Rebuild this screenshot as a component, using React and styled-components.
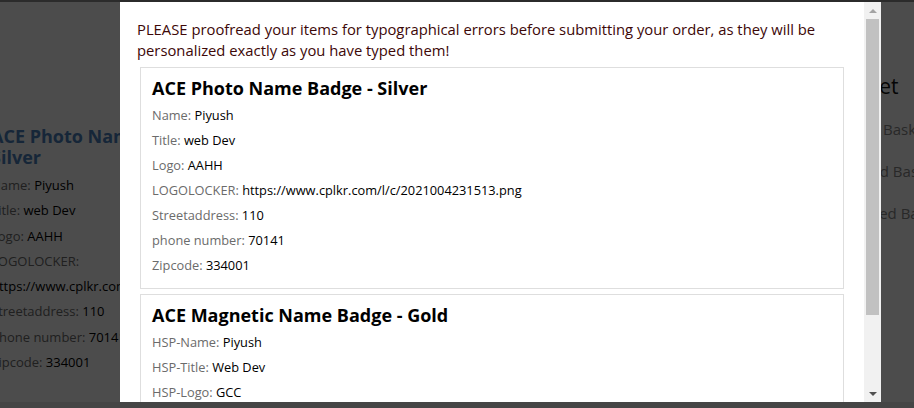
import React from 'react'
import styled, {createGlobalStyle} from 'styled-components'

const GlobalStyle = createGlobalStyle`
  html, body {
    margin: 0;
    padding: 0;
    background: #ffffff;
    font-family: "Open Sans", "Liberation Sans", sans-serif;
  }
`

const leftItems = [
  ['Name', 'Piyush'],
  ['Title', 'web Dev'],
  ['Logo', 'AAHH'],
  ['LOGOLOCKER', ''],
  ['', 'https://www.cplkr.com/l/c/2021004231513.png'],
  ['Streetaddress', '110'],
  ['phone number', '70141'],
  ['Zipcode', '334001'],
]

const basketItems = ['Gift Basket', 'Food Basket', 'Mixed Basket']

const orderItems = [
  {
    title: 'ACE Photo Name Badge - Silver',
    fields: [
      ['Name', 'Piyush'],
      ['Title', 'web Dev'],
      ['Logo', 'AAHH'],
      ['LOGOLOCKER', 'https://www.cplkr.com/l/c/2021004231513.png'],
      ['Streetaddress', '110'],
      ['phone number', '70141'],
      ['Zipcode', '334001'],
    ],
  },
  {
    title: 'ACE Magnetic Name Badge - Gold',
    fields: [
      ['HSP-Name', 'Piyush'],
      ['HSP-Title', 'Web Dev'],
      ['HSP-Logo', 'GCC'],
      ['HSP-Streetaddress', '110'],
    ],
  },
]

function App() {
  return (
    <>
      <GlobalStyle />
      <Page>
        <TopBar />
        <PageBody>
          <LeftColumn>
            <PageHeading>ACE Photo Name Badge - Silver</PageHeading>
            {leftItems.map(([label, value], i) => (
              <PageRow key={i}>
                {label && <Label>{label}: </Label>}
                <Value>{value}</Value>
              </PageRow>
            ))}
          </LeftColumn>
          <RightColumn>
            <BasketHeading>Basket</BasketHeading>
            {basketItems.map((b) => (
              <BasketRow key={b}>{b}</BasketRow>
            ))}
          </RightColumn>
        </PageBody>
        <Footer />
      </Page>

      <Overlay>
        <Modal>
          <ModalContent>
            <Notice>
              PLEASE proofread your items for typographical errors before submitting your order, as they will be
              personalized exactly as you have typed them!
            </Notice>
            <Cards>
              {orderItems.map((item) => (
                <Card key={item.title}>
                  <CardTitle>{item.title}</CardTitle>
                  {item.fields.map(([label, value]) => (
                    <Row key={label}>
                      <Label>{label}: </Label>
                      <Value>{value}</Value>
                    </Row>
                  ))}
                </Card>
              ))}
            </Cards>
          </ModalContent>
          <ScrollBar>
            <ScrollButton>
              <Arrow up />
            </ScrollButton>
            <Track>
              <Thumb />
            </Track>
            <ScrollButton>
              <Arrow />
            </ScrollButton>
          </ScrollBar>
        </Modal>
      </Overlay>
    </>
  )
}

export default App

const Page = styled.div`
  width: 914px;
  height: 408px;
  display: flex;
  flex-direction: column;
  overflow: hidden;
`

const TopBar = styled.div`
  height: 2px;
  background: #8f8f8f;
  flex-shrink: 0;
`

const PageBody = styled.div`
  flex: 1;
  display: flex;
  justify-content: space-between;
`

const LeftColumn = styled.div`
  width: 225px;
  margin-left: -9px;
  padding-top: 124px;
`

const PageHeading = styled.h2`
  margin: 0 0 5px;
  font-size: 18px;
  line-height: 21px;
  font-weight: 700;
  color: #4a7fbd;
`

const PageRow = styled.p`
  margin: 0;
  font-size: 13px;
  line-height: 25.3px;
  white-space: nowrap;
`

const RightColumn = styled.div`
  width: 130px;
  padding-top: 71px;
  margin-right: -70px;
`

const BasketHeading = styled.h2`
  margin: 0 0 8px -21px;
  font-size: 21px;
  line-height: 27px;
  font-weight: 500;
  color: #111;
`

const BasketRow = styled.div`
  font-size: 15px;
  line-height: 42px;
  color: #888;
`

const Footer = styled.div`
  height: 6px;
  background: #e6e6e6;
  flex-shrink: 0;
`

const Overlay = styled.div`
  position: fixed;
  inset: 0;
  background: rgba(0, 0, 0, 0.7);
  display: flex;
  justify-content: flex-start;
  align-items: flex-start;
  padding: 2px 0 0 120px;
`

const Modal = styled.div`
  width: 761px;
  height: 400px;
  background: #fff;
  display: flex;
  overflow: hidden;
`

const ModalContent = styled.div`
  flex: 1;
  overflow: hidden;
  padding-top: 17px;
`

const Notice = styled.p`
  margin: 0 0 6px;
  padding: 0 17px;
  font-size: 14.8px;
  line-height: 21px;
  color: #3d0808;
`

const Cards = styled.div`
  padding: 0 20px;
  display: flex;
  flex-direction: column;
  gap: 5px;
`

const Card = styled.div`
  border: 1px solid #dedede;
  padding: 7px 11px 10px;
`

const CardTitle = styled.h3`
  margin: 0 0 1px;
  font-size: 18px;
  line-height: 27px;
  font-weight: 700;
  color: #000;
`

const Row = styled.p`
  margin: 0;
  font-size: 12.8px;
  line-height: 25px;
`

const Label = styled.span`
  color: #6b6b6b;
  font-weight: 400;
`

const Value = styled.span`
  color: #000;
  font-weight: 500;
`

const ScrollBar = styled.div`
  width: 17px;
  flex-shrink: 0;
  background: #f1f1f1;
  display: flex;
  flex-direction: column;
`

const ScrollButton = styled.div`
  height: 17px;
  display: flex;
  align-items: center;
  justify-content: center;
`

const Arrow = styled.span`
  width: 0;
  height: 0;
  border-left: 4px solid transparent;
  border-right: 4px solid transparent;
  ${(p) => (p.up ? 'border-bottom: 4px solid #a3a3a3;' : 'border-top: 4px solid #505050;')}
`

const Track = styled.div`
  flex: 1;
`

const Thumb = styled.div`
  height: 296px;
  margin: 0 2px;
  background: #c1c1c1;
`
